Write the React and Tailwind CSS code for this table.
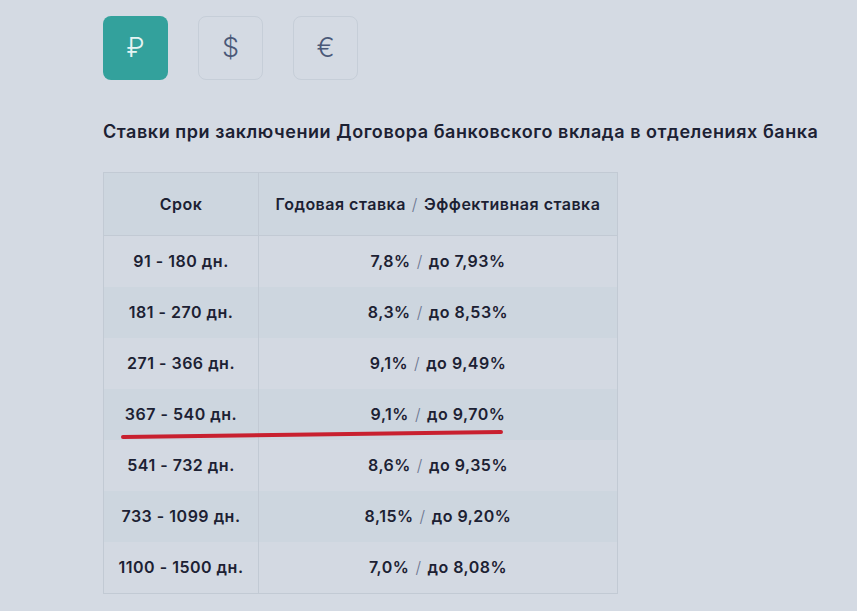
import { useState } from 'react';

const CURRENCIES = ['₽', '$', '€'];

const RATES = [
  ['91 - 180 дн.', '7,8%', 'до 7,93%'],
  ['181 - 270 дн.', '8,3%', 'до 8,53%'],
  ['271 - 366 дн.', '9,1%', 'до 9,49%'],
  ['367 - 540 дн.', '9,1%', 'до 9,70%'],
  ['541 - 732 дн.', '8,6%', 'до 9,35%'],
  ['733 - 1099 дн.', '8,15%', 'до 9,20%'],
  ['1100 - 1500 дн.', '7,0%', 'до 8,08%'],
];

const Slash = () => <span className="mx-[6px] font-light text-[#6b7590]">/</span>;

export default function App() {
  const [cur, setCur] = useState(0);

  return (
    <div className="min-h-[611px] bg-[#d4dae3] text-[#1c2133] font-['Inter',sans-serif]">
      <div className="pl-[103px] pt-4">
        <div className="flex gap-[30px]">
          {CURRENCIES.map((c, i) => (
            <button key={c} onClick={() => setCur(i)}
              className={`w-[65px] h-[64px] rounded-lg flex items-center justify-center text-[27px] font-light ${cur === i ? 'bg-[#33a19c] text-[#e6f4f3]' : 'border border-[#c6ced8] text-[#4a5878]'}`}>
              {c}
            </button>
          ))}
        </div>

        <h2 className="mt-[40px] text-[18px] font-semibold tracking-[0.55px] leading-6 whitespace-nowrap">
          Ставки при заключении Договора банковского вклада в отделениях банка
        </h2>

        <div className="relative mt-[28px] w-[515px]">
          <table className="w-full border-collapse text-[16px] tracking-[0.5px] font-semibold">
            <thead>
              <tr className="bg-[#cdd6df] h-[63px]">
                <th className="w-[155px] border border-[#c2cad4] font-semibold">Срок</th>
                <th className="border border-[#c2cad4] font-semibold whitespace-nowrap">
                  Годовая ставка<Slash />Эффективная ставка
                </th>
              </tr>
            </thead>
            <tbody>
              {RATES.map(([term, rate, eff], i) => (
                <tr key={term} className={`h-[51px] ${i % 2 ? 'bg-[#cdd6df]' : 'bg-[#d3d9e2]'}`}>
                  <td className="border-x border-[#c2cad4] text-center">{term}</td>
                  <td className="border-x border-[#c2cad4] text-center">
                    {rate}<Slash />{eff}
                  </td>
                </tr>
              ))}
            </tbody>
          </table>
          <div className="h-px bg-[#c2cad4]" />

          {/* hand-drawn underline */}
          <svg className="absolute left-[17px] top-[256px] pointer-events-none" width="384" height="12" viewBox="0 0 384 12">
            <path d="M3 9 C 90 8, 200 6, 381 4" stroke="#c8202f" strokeWidth="4" strokeLinecap="round" fill="none" />
          </svg>
        </div>
      </div>
    </div>
  );
}
